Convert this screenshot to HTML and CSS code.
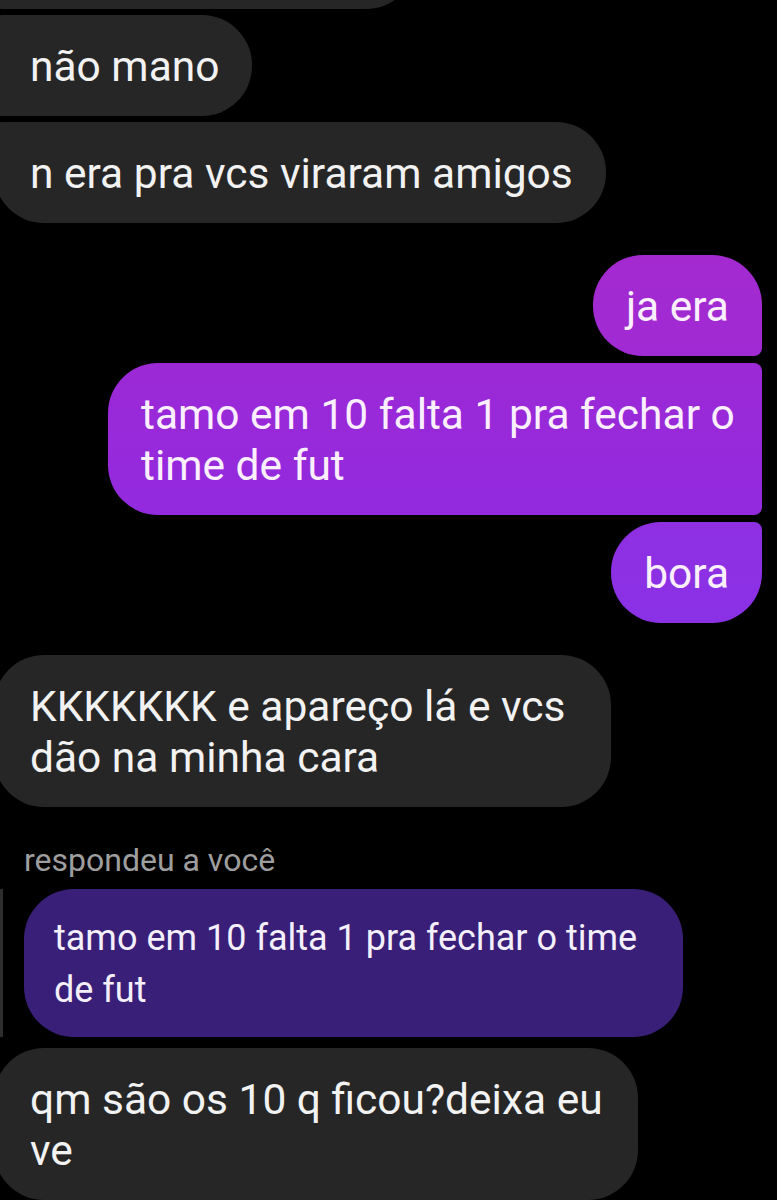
FILE: index.html
```html
<!DOCTYPE html>
<html lang="pt-BR">
<head>
    <meta charset="UTF-8">
    <meta name="viewport" content="width=device-width, initial-scale=1.0">
    <title>Conversa</title>
    <link rel="stylesheet" href="styles.css">
</head>
<body>
    <div id="chat">
        <div class="group group-in">
            <div class="bubble bubble-in bubble-peek"></div>
            <div class="bubble bubble-in">não mano</div>
            <div class="bubble bubble-in bubble-last">n era pra vcs viraram amigos</div>
        </div>

        <div class="group group-out">
            <div class="bubble bubble-out bubble-first out-1">ja era</div>
            <div class="bubble bubble-out out-2 wide-654">tamo em 10 falta 1 pra fechar o time de fut</div>
            <div class="bubble bubble-out bubble-last out-3">bora</div>
        </div>

        <div class="group group-in">
            <div class="bubble bubble-in bubble-single wide-617">KKKKKKK e apareço lá e vcs dão na minha cara</div>
        </div>

        <div class="group group-in reply">
            <div class="reply-label">respondeu a você</div>
            <div class="reply-quote">
                <div class="quote-bubble">tamo em 10 falta 1 pra fechar o time de fut</div>
            </div>
            <div class="bubble bubble-in bubble-single wide-644">qm são os 10 q ficou?deixa eu ve</div>
        </div>
    </div>
</body>
</html>
```

FILE: styles.css
```css
* {
    box-sizing: border-box;
}

body {
    margin: 0;
    background-color: #000;
    font-family: Roboto, "Noto Sans", sans-serif;
    overflow: hidden;
}

#chat {
    display: flex;
    flex-direction: column;
    gap: 32px;
    padding: 0 15px 0 0;
}

.group {
    display: flex;
    flex-direction: column;
    gap: 6px;
}

.group-in {
    align-items: flex-start;
}

.group-out {
    align-items: flex-end;
    gap: 7px;
}

.bubble {
    max-width: 660px;
    padding: 26px 33px 24px;
    font-size: 42.5px;
    line-height: 51px;
    color: #f2f2f2;
}

.bubble-in {
    margin-left: -6px;
    padding-left: 36px;
    background-color: #262626;
    border-radius: 8px 50px 50px 8px;
}

.bubble-in.bubble-last {
    border-bottom-left-radius: 50px;
}

.bubble-in.bubble-single {
    border-radius: 50px;
}

.bubble-peek {
    width: 422px;
    height: 100px;
    margin-top: -91px;
}

.bubble-out {
    color: #fbeffe;
    border-radius: 50px 8px 8px 50px;
}

.bubble-out.bubble-first {
    border-top-right-radius: 50px;
}

.bubble-out.bubble-last {
    border-bottom-right-radius: 50px;
}

.out-1 {
    background: linear-gradient(#a42ad0, #a02ad3);
}

.out-2 {
    background: linear-gradient(#9c29d6, #922ade);
}

.out-3 {
    background: linear-gradient(#8f2fe2, #8a31e6);
}

.wide-654 {
    width: 654px;
    padding-right: 24px;
}

.wide-617 {
    width: 617px;
}

.wide-644 {
    width: 644px;
}

.reply {
    margin-top: 4px;
    gap: 0;
}

.reply-label {
    padding-left: 24px;
    font-size: 32px;
    line-height: 34px;
    color: #9e9e9e;
}

.reply-quote {
    margin-top: 12px;
    padding-left: 24px;
    border-left: 3px solid #2e2e2e;
}

.quote-bubble {
    width: 659px;
    margin-left: -3px;
    padding: 23px 30px 21px;
    font-size: 36px;
    line-height: 52px;
    color: #f4f0fb;
    background-color: #3a1f78;
    border-radius: 50px;
}

.reply .bubble {
    margin-top: 11px;
}
```
